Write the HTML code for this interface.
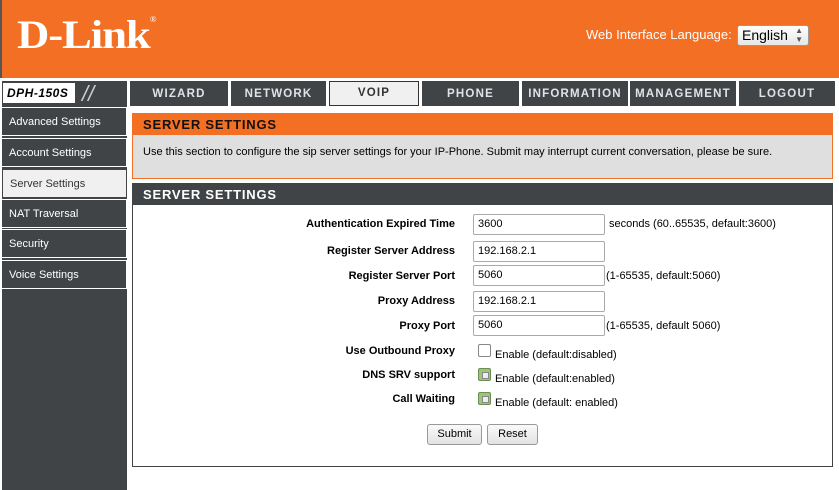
<!DOCTYPE html>
<html><head><style>
*{margin:0;padding:0;box-sizing:border-box}
body{width:839px;height:490px;overflow:hidden;background:#fff;font-family:"Liberation Sans",sans-serif;position:relative}
.abs{position:absolute}
.hdr{left:0;top:0;width:839px;height:78px;background:#f36f24;border-left:2px solid #555}
.logo{left:17px;top:11px;color:#fff;font-family:"Liberation Serif",serif;font-weight:bold;font-size:40px;letter-spacing:-1px;transform:scaleX(1.12);transform-origin:left top}
.lang{left:586px;top:27px;color:#fff;font-size:13px}
.sel{left:737px;top:25px;width:72px;height:21px;background:linear-gradient(#fff,#e6e6e6);border:1px solid #999;border-radius:3px;font-size:14px;padding:1px 4px;color:#000}
.model{left:2px;top:81px;width:125px;height:25px;background:#404446}
.mlab{left:3px;top:83px;width:72px;height:20px;background:#fff;font-style:italic;font-weight:bold;font-size:12px;padding:3px 4px;letter-spacing:.5px}
.tab{top:81px;height:25px;background:#404446;color:#dfe3e8;font-weight:bold;font-size:11.5px;letter-spacing:1.2px;text-align:center;line-height:26px}
.side{left:2px;top:106px;width:125px;height:384px;background:#404446}
.si{left:2px;width:125px;height:29px;color:#fff;font-size:11px;padding-left:7px;line-height:29px;border:1px solid #fff;border-left:none;background:#404446}
.lbl{right:384px;font-weight:bold;font-size:11px;text-align:right}
.inp{left:473px;width:132px;height:21px;border:1px solid #aaa;border-radius:2px;font-size:11px;padding:3px 4px;background:#fff}
.note{font-size:11px}
.cb{left:478px;width:13px;height:13px;border:1px solid #888;border-radius:2px;background:#fff}
.cb.on{background:#9cc57a;border-color:#6a8f50}
.cb.on::after{content:"";position:absolute;left:3px;top:3px;width:5px;height:5px;background:#eee;border:1px solid #888}
.btn{top:424px;height:21px;border:1px solid #999;border-radius:3px;background:linear-gradient(#fafafa,#e2e2e2);font-size:11px;text-align:center;line-height:19px}
</style></head><body>
<div class="abs hdr"></div>
<div class="abs logo">D-Link<sup style="font-size:8px;vertical-align:top;position:relative;top:4px;font-weight:normal">®</sup></div>
<div class="abs lang">Web Interface Language:</div>
<div class="abs sel">English<span style="position:absolute;right:5px;top:0;font-size:8px;line-height:9px;color:#555">▲<br>▼</span></div>
<div class="abs model"></div>
<div class="abs mlab">DPH-150S</div>
<div class="abs" style="left:82px;top:81px;color:#ccc;font-size:22px;font-style:italic;line-height:25px">//</div>
<div class="abs tab" style="left:130px;width:98px">WIZARD</div>
<div class="abs tab" style="left:231px;width:95px">NETWORK</div>
<div class="abs tab" style="left:329px;width:90px;background:#f0f0f0;color:#333;border:1px solid #333;line-height:22px">VOIP</div>
<div class="abs tab" style="left:422px;width:97px">PHONE</div>
<div class="abs tab" style="left:522px;width:106px">INFORMATION</div>
<div class="abs tab" style="left:630px;width:106px">MANAGEMENT</div>
<div class="abs tab" style="left:739px;width:96px">LOGOUT</div>
<div class="abs side"></div>
<div class="abs si" style="top:107px">Advanced Settings</div>
<div class="abs si" style="top:138px">Account Settings</div>
<div class="abs si" style="top:169px;background:#f0f0f0;color:#333;border:1px solid #444">Server Settings</div>
<div class="abs si" style="top:199px">NAT Traversal</div>
<div class="abs si" style="top:229px">Security</div>
<div class="abs si" style="top:260px">Voice Settings</div>
<div class="abs" style="left:132px;top:113px;width:701px;height:66px;border:1px solid #f36f24;background:#dfdfdf"></div>
<div class="abs" style="left:132px;top:113px;width:701px;height:22px;background:#f36f24;font-weight:bold;font-size:13px;letter-spacing:.8px;padding:4px 11px;color:#111">SERVER SETTINGS</div>
<div class="abs" style="left:143px;top:146px;font-size:11px">Use this section to configure the sip server settings for your IP-Phone. Submit may interrupt current conversation, please be sure.</div>
<div class="abs" style="left:132px;top:183px;width:701px;height:284px;border:1px solid #404446"></div>
<div class="abs" style="left:132px;top:183px;width:701px;height:22px;background:#404446;font-weight:bold;font-size:13px;letter-spacing:.8px;padding:4px 11px;color:#fff">SERVER SETTINGS</div>

<div class="abs lbl" style="top:218px">Authentication Expired Time</div>
<div class="abs inp" style="top:214px">3600</div>
<div class="abs note" style="left:609px;top:218px">seconds (60..65535, default:3600)</div>
<div class="abs lbl" style="top:245px">Register Server Address</div>
<div class="abs inp" style="top:241px">192.168.2.1</div>
<div class="abs lbl" style="top:270px">Register Server Port</div>
<div class="abs inp" style="top:265px">5060</div>
<div class="abs note" style="left:606px;top:270px">(1-65535, default:5060)</div>
<div class="abs lbl" style="top:295px">Proxy Address</div>
<div class="abs inp" style="top:291px">192.168.2.1</div>
<div class="abs lbl" style="top:320px">Proxy Port</div>
<div class="abs inp" style="top:315px">5060</div>
<div class="abs note" style="left:606px;top:320px">(1-65535, default 5060)</div>
<div class="abs lbl" style="top:345px">Use Outbound Proxy</div>
<div class="abs cb" style="top:344px"></div>
<div class="abs note" style="left:495px;top:349px">Enable (default:disabled)</div>
<div class="abs lbl" style="top:369px">DNS SRV support</div>
<div class="abs cb on" style="top:368px"></div>
<div class="abs note" style="left:495px;top:373px">Enable (default:enabled)</div>
<div class="abs lbl" style="top:393px">Call Waiting</div>
<div class="abs cb on" style="top:392px"></div>
<div class="abs note" style="left:495px;top:397px">Enable (default: enabled)</div>
<div class="abs btn" style="left:427px;width:55px">Submit</div>
<div class="abs btn" style="left:487px;width:51px">Reset</div>
</body></html>
